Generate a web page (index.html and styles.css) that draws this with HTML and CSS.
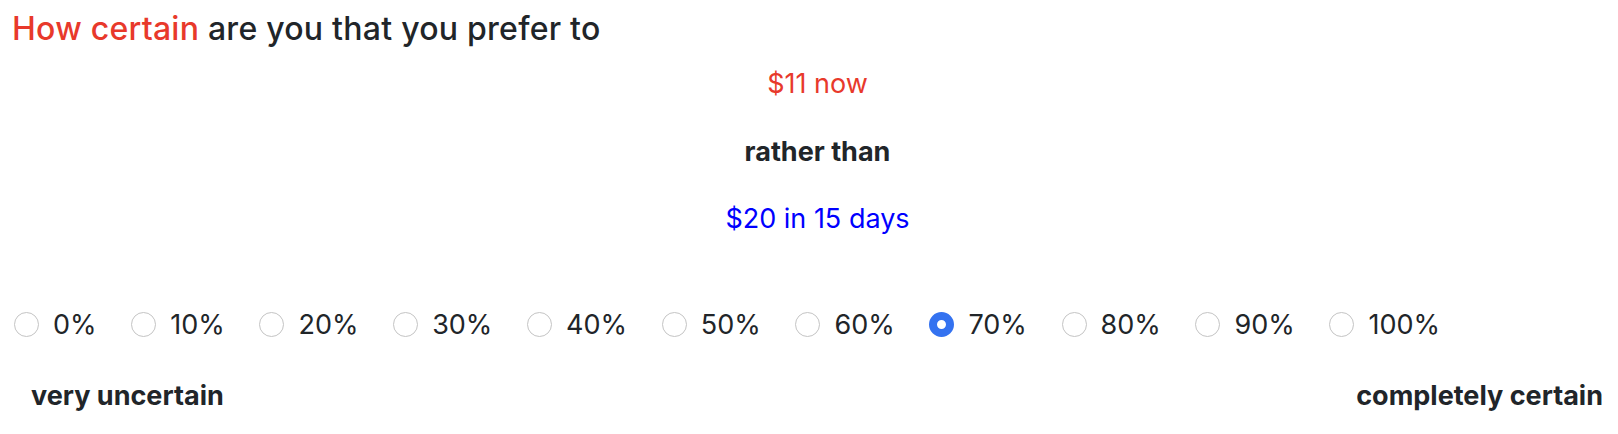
FILE: index.html
```html
<!DOCTYPE html>
<html lang="en">
<head>
<meta charset="utf-8">
<link rel="stylesheet" href="styles.css">
</head>
<body>
<div class="page">
  <h2 class="question"><span class="hl">How certain</span> are you that you prefer to</h2>
  <div class="options">
    <p class="opt now">$11 now</p>
    <p class="opt than">rather than</p>
    <p class="opt later">$20 in 15 days</p>
  </div>
  <div class="scale">
    <label class="choice"><input type="radio" name="c"><span>0%</span></label>
    <label class="choice"><input type="radio" name="c"><span>10%</span></label>
    <label class="choice"><input type="radio" name="c"><span>20%</span></label>
    <label class="choice"><input type="radio" name="c"><span>30%</span></label>
    <label class="choice"><input type="radio" name="c"><span>40%</span></label>
    <label class="choice"><input type="radio" name="c"><span>50%</span></label>
    <label class="choice"><input type="radio" name="c"><span>60%</span></label>
    <label class="choice"><input type="radio" name="c" checked><span>70%</span></label>
    <label class="choice"><input type="radio" name="c"><span>80%</span></label>
    <label class="choice"><input type="radio" name="c"><span>90%</span></label>
    <label class="choice"><input type="radio" name="c"><span>100%</span></label>
  </div>
  <div class="ends">
    <span class="end">very uncertain</span>
    <span class="end">completely certain</span>
  </div>
</div>
</body>
</html>
```
FILE: styles.css
```css
html, body {
  margin: 0;
  padding: 0;
  background: #ffffff;
}
body {
  font-family: Inter, "Liberation Sans", sans-serif;
  color: #212529;
}
.page {
  padding: 0 15px 0 12px;
}
.question {
  margin: 0;
  padding-top: 10px;
  font-size: 32px;
  font-weight: 500;
  line-height: 38px;
  letter-spacing: 0.25px;
}
.hl {
  color: #e8392b;
}
.options {
  display: flex;
  flex-direction: column;
  align-items: center;
  padding-left: 20px;
  margin-top: 18px;
}
.opt {
  margin: 0;
  font-size: 27px;
  line-height: 36px;
  height: 67.5px;
}
.now { color: #e8392b; }
.than { font-weight: 700; }
.later { color: #0000ff; }
.scale {
  display: flex;
  flex-wrap: wrap;
  gap: 0 34.7px;
  margin-top: 38px;
  padding-left: 2px;
  align-items: center;
}
.choice {
  display: flex;
  align-items: center;
  gap: 14px;
  font-size: 27px;
  line-height: 36px;
}
.choice input {
  appearance: none;
  -webkit-appearance: none;
  margin: 0;
  width: 25px;
  height: 25px;
  border: 1.5px solid #c4c4c4;
  border-radius: 50%;
  background: #fff;
  box-sizing: border-box;
}
.choice input:checked {
  border: 8px solid #3472f0;
}
.ends {
  display: flex;
  justify-content: space-between;
  padding-left: 19px;
  margin-top: 35.5px;
}
.end {
  font-size: 27px;
  font-weight: 700;
  line-height: 36px;
}
```
